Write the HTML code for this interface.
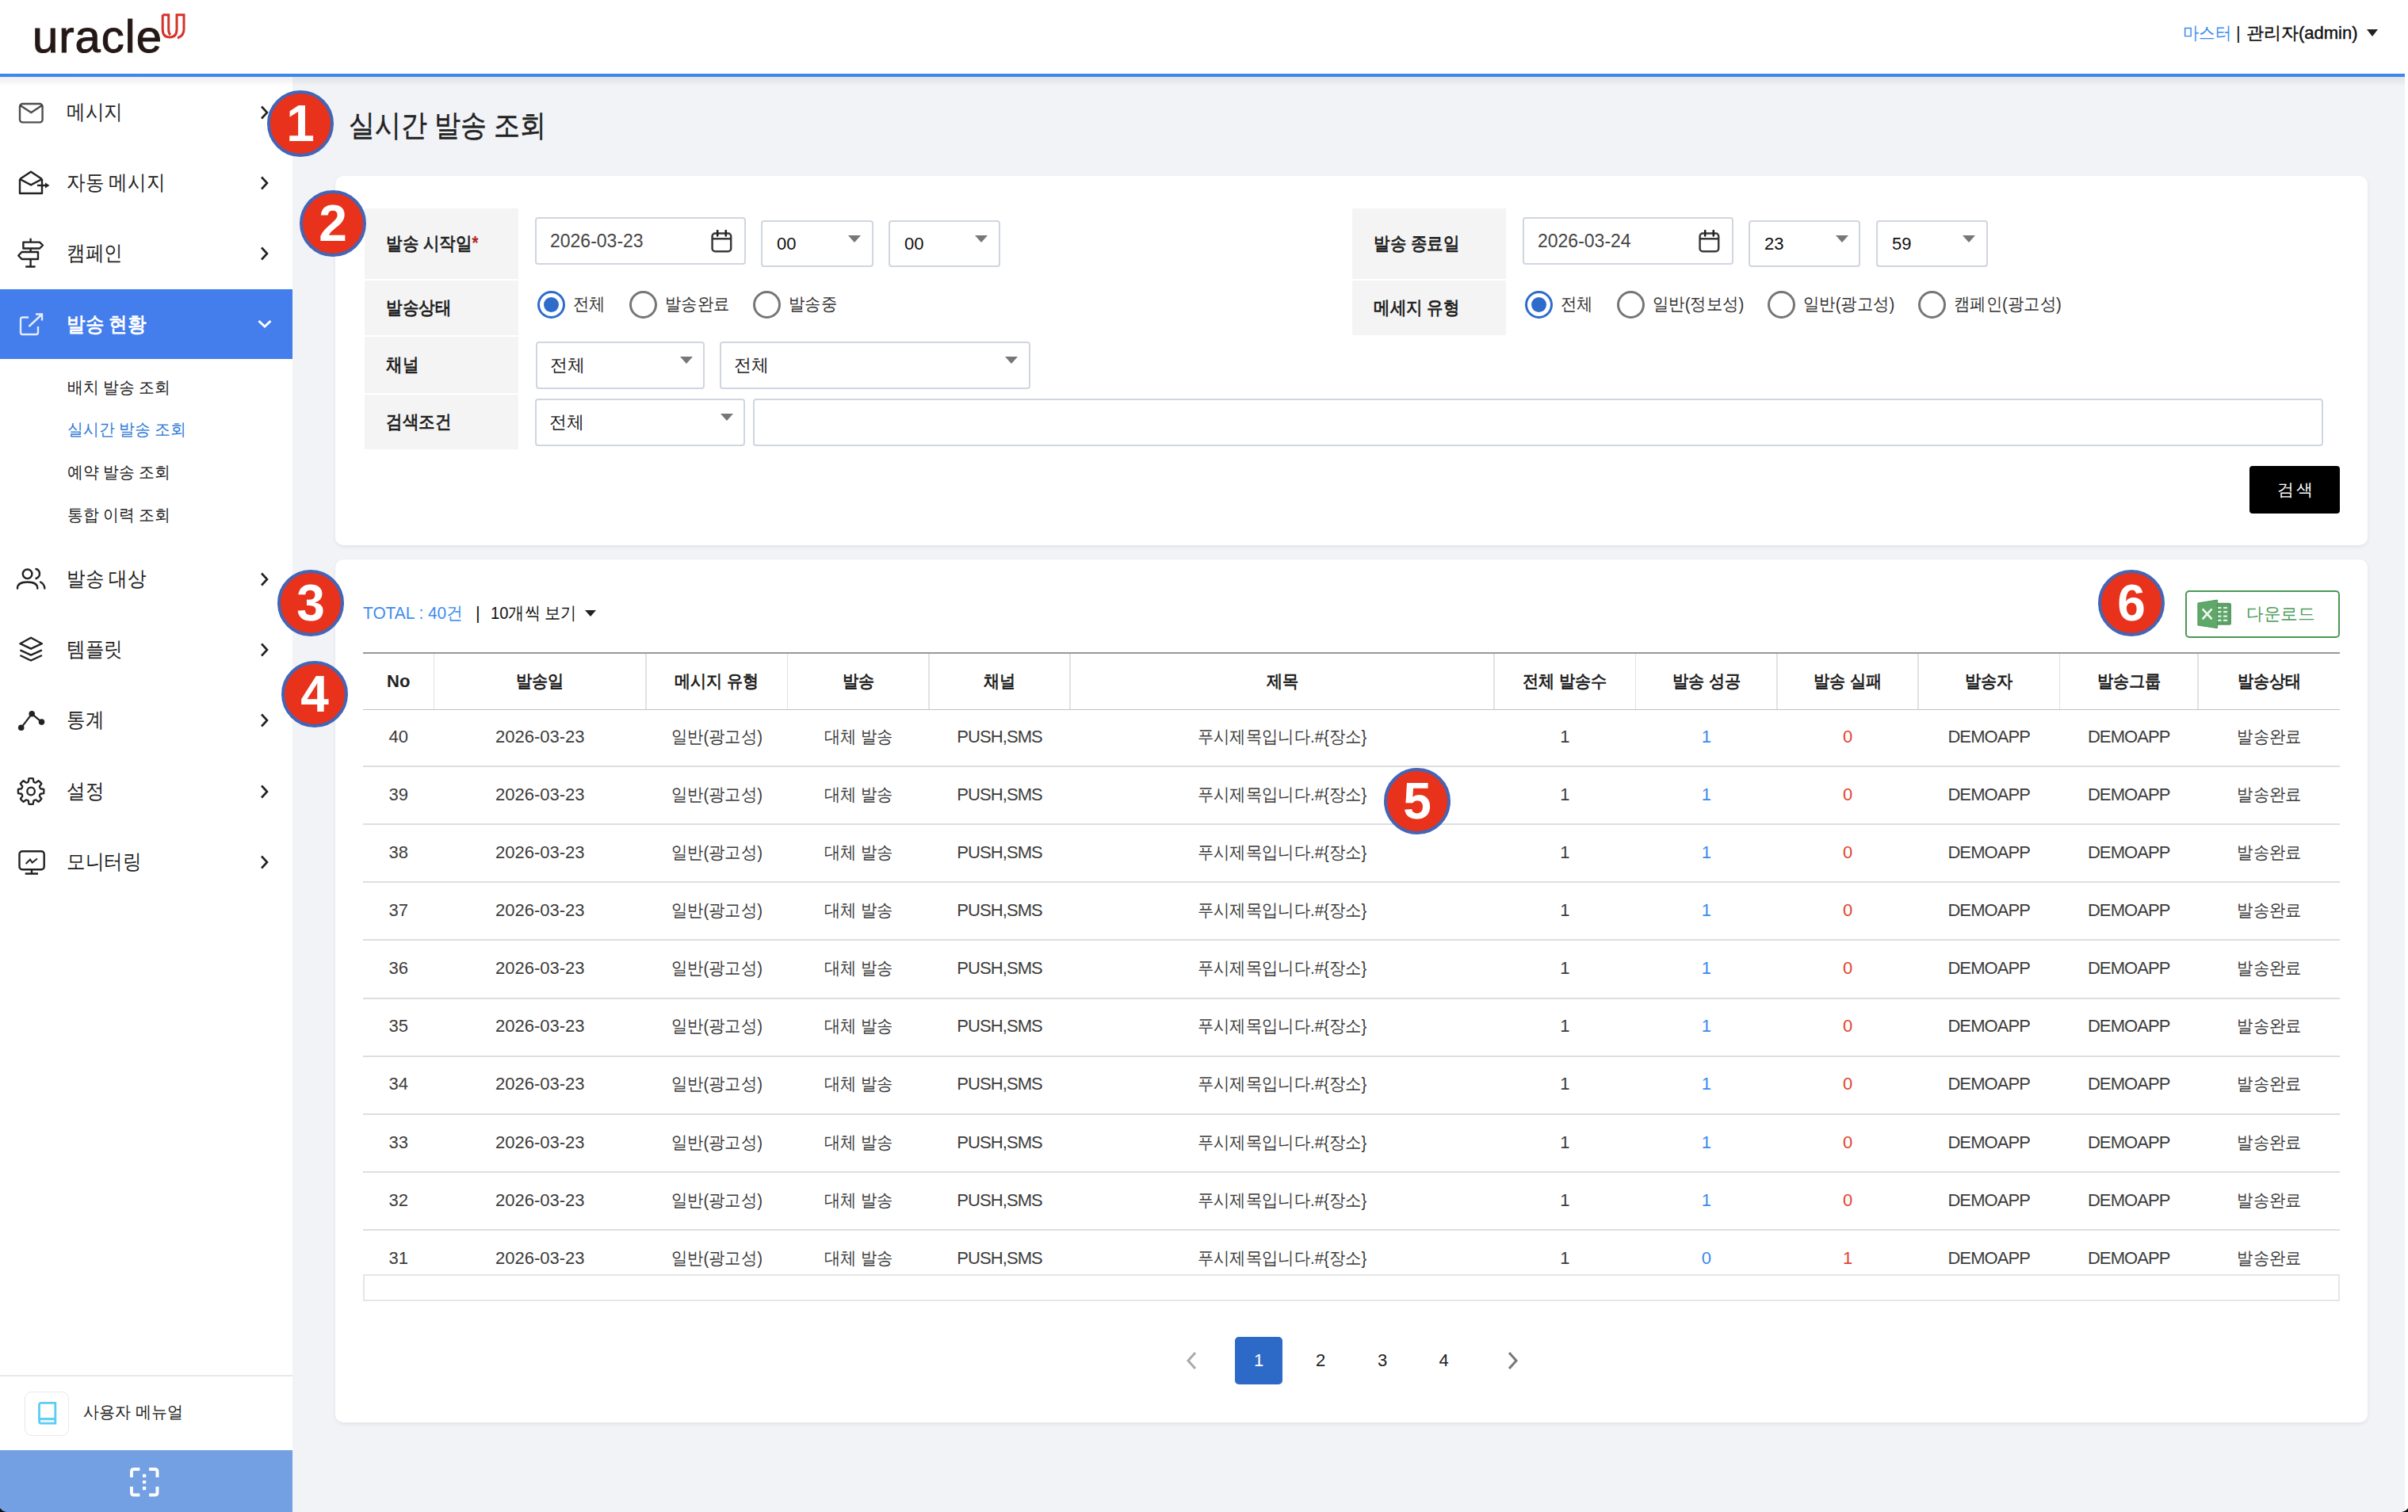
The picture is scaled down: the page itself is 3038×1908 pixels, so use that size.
<!DOCTYPE html><html><head><meta charset="utf-8"><title>실시간 발송 조회</title><style>
*{box-sizing:border-box;margin:0;padding:0}
html,body{width:3038px;height:1908px;overflow:hidden;background:#fff;font-family:"Liberation Sans", sans-serif;color:#222}
.abs{position:absolute}
#hdr{position:absolute;left:0;top:0;width:3034px;height:93px;background:#fff}
#bline{position:absolute;left:0;top:93px;width:3034px;height:4px;background:#3a86f2}
#content{position:absolute;left:369px;top:97px;width:2665px;height:1811px;background:#f1f3f7}
#shadow{position:absolute;left:0;top:97px;width:3034px;height:12px;background:linear-gradient(rgba(0,0,0,0.07),rgba(0,0,0,0))}
#side{position:absolute;left:0;top:97px;width:369px;height:1811px;background:#fff}
.mi{position:absolute;left:0;width:369px;height:89px}
.sx{display:inline-block;transform-origin:0 50%}
.sxc{display:inline-block;transform-origin:50% 50%}
.mi .t{position:absolute;left:83.5px;top:0;line-height:89px;font-size:25.5px;color:#222;white-space:nowrap}
.mi svg.ic{position:absolute;left:0;top:0}
.sub{position:absolute;left:85px;font-size:20.8px;color:#222;white-space:nowrap;line-height:30px}
.badge{position:absolute;border-radius:50%;background:#e8321b;border:4px solid #4465b6;display:flex;align-items:center;justify-content:center;z-index:20}
.badge span{color:#fff;font-weight:bold;font-size:64px;line-height:1;font-family:"Liberation Sans", sans-serif}
.card{position:absolute;background:#fff;border-radius:10px;box-shadow:0 2px 5px rgba(0,0,0,0.07)}
.lab{position:absolute;background:#f4f4f4;font-weight:bold;font-size:23px;color:#222;padding-left:27px;white-space:nowrap}
.inp{position:absolute;background:#fff;border:2px solid #d0d6df;border-radius:4px}
.inp .v{position:absolute;left:18px;top:0;bottom:0;display:flex;align-items:center;font-size:22px;color:#333;white-space:nowrap}
.tri{position:absolute;width:0;height:0;border-left:8.5px solid transparent;border-right:8.5px solid transparent;border-top:9px solid #777}
.radio{position:absolute;width:35px;height:35px;border-radius:50%;border:3.5px solid #767676;background:#fff}
.radio.on{border-color:#2e6ccc}
.radio.on::after{content:"";position:absolute;left:4.5px;top:4.5px;width:19px;height:19px;border-radius:50%;background:#2e6ccc}
.rl{position:absolute;font-size:22px;color:#333;white-space:nowrap;line-height:30px}
.th{position:absolute;top:825px;height:70px;display:flex;align-items:center;justify-content:center;font-weight:bold;font-size:22px;color:#222;white-space:nowrap}
.td{position:absolute;height:30px;line-height:30px;text-align:center;font-size:22px;color:#3c3c3c;white-space:nowrap}
.td.e{letter-spacing:-0.9px}
.hl{position:absolute;left:458px;width:2494px;height:2px;background:#dedede}
.vl{position:absolute;top:825px;width:1.5px;height:70px;background:#e2e2e2}
.pg{position:absolute;top:1687px;width:60px;height:60px;display:flex;align-items:center;justify-content:center;font-size:22px;color:#222}
</style></head><body>
<div id="hdr">
<div class="abs" style="left:41px;top:16px;font-size:58px;color:#231815;letter-spacing:1px;line-height:60px;-webkit-text-stroke:1px #231815">uracle</div>
<svg class="abs" style="left:203px;top:17px" width="33" height="34" viewBox="0 0 33 34"><path d="M2.2 1.7 V20 Q2.2 30 11 30 Q20 30 20 20 V1.7 H29 V20 Q29 28 21 31" fill="none" stroke="#d5332a" stroke-width="3" stroke-linejoin="miter"/><path d="M2.2 1.7 H9.7 V20 Q9.7 25 12 27" fill="none" stroke="#d5332a" stroke-width="3"/></svg>
<div class="abs" style="left:2754px;top:27px;font-size:22px;line-height:30px;white-space:nowrap;color:#3b8af0"><span class="sx" style="transform:scaleX(0.926)">마스터</span></div>
<div class="abs" style="left:2821px;top:27px;font-size:22px;line-height:30px;color:#111">|</div>
<div class="abs" style="left:2834px;top:27px;font-size:22px;line-height:30px;white-space:nowrap;color:#111;-webkit-text-stroke:0.4px #111">관리자(admin)</div>
<div class="tri" style="left:2986px;top:37px;border-top-color:#222;border-left-width:7px;border-right-width:7px;border-top-width:9px"></div>
</div>
<div id="bline"></div>
<div id="content"></div>
<div id="side"></div>
<div id="shadow"></div>
<div class="mi" style="top:97px"><svg class="ic" width="70" height="89" viewBox="0 0 70 89"><rect x="25" y="34" width="28.6" height="23.4" rx="3.5" fill="none" stroke="#222" stroke-width="2.4" opacity="0.8"/><path d="M25.5 36 L39.3 45 L53 36" fill="none" stroke="#222" stroke-width="2.4" opacity="0.8"/></svg><div class="t"><span class="sx" style="transform:scaleX(0.905)">메시지</span></div><svg class="abs" style="left:322px;top:34px" width="22" height="22" viewBox="0 0 22 22"><path d="M8 3.5 L15 11 L8 18.5" fill="none" stroke="#222" stroke-width="2.6"/></svg></div>
<div class="mi" style="top:186px"><svg class="ic" width="70" height="89" viewBox="0 0 70 89"><path d="M25 40 L39 30.7 L53 40" fill="none" stroke="#222" stroke-width="2.4" stroke-linejoin="round"/><path d="M25 40 V58 H53 V40" fill="none" stroke="#222" stroke-width="2.4" stroke-linejoin="round"/><path d="M25 40 L39 47.3 L53 40" fill="none" stroke="#222" stroke-width="2.4"/><path d="M47 48 H60" fill="none" stroke="#222" stroke-width="2.4"/><path d="M57 44.5 L62.5 48 L57 51.5 Z" fill="#222"/></svg><div class="t"><span class="sx" style="transform:scaleX(0.905)">자동 메시지</span></div><svg class="abs" style="left:322px;top:34px" width="22" height="22" viewBox="0 0 22 22"><path d="M8 3.5 L15 11 L8 18.5" fill="none" stroke="#222" stroke-width="2.6"/></svg></div>
<div class="mi" style="top:275px"><svg class="ic" width="70" height="89" viewBox="0 0 70 89"><path d="M38.6 25.8 V61.5 M32.2 61.5 H44.6" fill="none" stroke="#222" stroke-width="2.4"/><path d="M29.4 30.6 H50 L54 34.5 L50 38.5 H29.4 Z" fill="#fff" stroke="#222" stroke-width="2.4" stroke-linejoin="round"/><path d="M48 43 H27.5 L23.2 47.5 L27.5 52 H48 Z" fill="#fff" stroke="#222" stroke-width="2.4" stroke-linejoin="round"/></svg><div class="t"><span class="sx" style="transform:scaleX(0.905)">캠페인</span></div><svg class="abs" style="left:322px;top:34px" width="22" height="22" viewBox="0 0 22 22"><path d="M8 3.5 L15 11 L8 18.5" fill="none" stroke="#222" stroke-width="2.6"/></svg></div>
<div class="mi" style="top:685.5px"><svg class="ic" width="70" height="89" viewBox="0 0 70 89"><circle cx="34.6" cy="38.3" r="5.8" fill="none" stroke="#222" stroke-width="2.4"/><path d="M22 56.5 Q22 48.5 34.6 48.5 Q47.3 48.5 47.3 56.5" fill="none" stroke="#222" stroke-width="2.4" stroke-linecap="round"/><path d="M45.5 32 Q50 33.5 50 38 Q50 42.5 45.5 44 M51 48.5 Q56 51 56.3 56.5" fill="none" stroke="#222" stroke-width="2.4" stroke-linecap="round"/></svg><div class="t"><span class="sx" style="transform:scaleX(0.905)">발송 대상</span></div><svg class="abs" style="left:322px;top:34px" width="22" height="22" viewBox="0 0 22 22"><path d="M8 3.5 L15 11 L8 18.5" fill="none" stroke="#222" stroke-width="2.6"/></svg></div>
<div class="mi" style="top:775px"><svg class="ic" width="70" height="89" viewBox="0 0 70 89"><path d="M25.4 37.2 L39 29.8 L52.9 37.2 L39 43.7 Z" fill="none" stroke="#222" stroke-width="2.4" stroke-linejoin="round"/><path d="M25.4 45.3 L39 51.6 L52.9 45.3 M25.4 52 L39 58.5 L52.9 52" fill="none" stroke="#222" stroke-width="2.4" stroke-linejoin="round"/></svg><div class="t"><span class="sx" style="transform:scaleX(0.905)">템플릿</span></div><svg class="abs" style="left:322px;top:34px" width="22" height="22" viewBox="0 0 22 22"><path d="M8 3.5 L15 11 L8 18.5" fill="none" stroke="#222" stroke-width="2.6"/></svg></div>
<div class="mi" style="top:864px"><svg class="ic" width="70" height="89" viewBox="0 0 70 89"><path d="M26.7 54.3 L40.2 36.8 L52.5 47.1" fill="none" stroke="#222" stroke-width="2.2"/><circle cx="26.7" cy="54.3" r="3.8" fill="#222"/><circle cx="40.2" cy="36.8" r="3.8" fill="#222"/><circle cx="52.5" cy="47.1" r="3.8" fill="#222"/></svg><div class="t"><span class="sx" style="transform:scaleX(0.905)">통계</span></div><svg class="abs" style="left:322px;top:34px" width="22" height="22" viewBox="0 0 22 22"><path d="M8 3.5 L15 11 L8 18.5" fill="none" stroke="#222" stroke-width="2.6"/></svg></div>
<div class="mi" style="top:953.5px"><svg class="ic" width="70" height="89" viewBox="0 0 70 89"><g transform="translate(39.1,44.5)"><path d="M-3.24 -12.07 L-2.69 -16.08 A16.3 16.3 0 0 1 2.69 -16.08 L3.24 -12.07 Q4.40 -10.62 6.25 -10.83 L6.25 -10.83 L9.47 -13.27 A16.3 16.3 0 0 1 13.27 -9.47 L10.83 -6.25 Q10.62 -4.40 12.07 -3.24 L12.07 -3.24 L16.08 -2.69 A16.3 16.3 0 0 1 16.08 2.69 L12.07 3.24 Q10.62 4.40 10.83 6.25 L10.83 6.25 L13.27 9.47 A16.3 16.3 0 0 1 9.47 13.27 L6.25 10.83 Q4.40 10.62 3.24 12.07 L3.24 12.07 L2.69 16.08 A16.3 16.3 0 0 1 -2.69 16.08 L-3.24 12.07 Q-4.40 10.62 -6.25 10.83 L-6.25 10.83 L-9.47 13.27 A16.3 16.3 0 0 1 -13.27 9.47 L-10.83 6.25 Q-10.62 4.40 -12.07 3.24 L-12.07 3.24 L-16.08 2.69 A16.3 16.3 0 0 1 -16.08 -2.69 L-12.07 -3.24 Q-10.62 -4.40 -10.83 -6.25 L-10.83 -6.25 L-13.27 -9.47 A16.3 16.3 0 0 1 -9.47 -13.27 L-6.25 -10.83 Q-4.40 -10.62 -3.24 -12.07 Z" fill="none" stroke="#222" stroke-width="2.3" stroke-linejoin="round"/><circle r="4.8" fill="none" stroke="#222" stroke-width="2.3"/></g></svg><div class="t"><span class="sx" style="transform:scaleX(0.905)">설정</span></div><svg class="abs" style="left:322px;top:34px" width="22" height="22" viewBox="0 0 22 22"><path d="M8 3.5 L15 11 L8 18.5" fill="none" stroke="#222" stroke-width="2.6"/></svg></div>
<div class="mi" style="top:1042.5px"><svg class="ic" width="70" height="89" viewBox="0 0 70 89"><rect x="24.5" y="31.3" width="31.2" height="23" rx="3.5" fill="none" stroke="#222" stroke-width="2.4"/><path d="M31.7 59.5 H48 M40 54.5 V59.5" fill="none" stroke="#222" stroke-width="2.4"/><path d="M32.7 47 L38 41.5 L40.7 45.5 L47 40.5" fill="none" stroke="#222" stroke-width="2"/></svg><div class="t"><span class="sx" style="transform:scaleX(0.905)">모니터링</span></div><svg class="abs" style="left:322px;top:34px" width="22" height="22" viewBox="0 0 22 22"><path d="M8 3.5 L15 11 L8 18.5" fill="none" stroke="#222" stroke-width="2.6"/></svg></div>
<div class="mi" style="top:365px;height:88px;background:#447dec"><svg class="ic" width="70" height="89" viewBox="0 0 70 89"><path d="M36 35.5 H28.5 Q26 35.5 26 38 V54.5 Q26 57 28.5 57 H45.5 Q48 57 48 54.5 V47" fill="none" stroke="#fff" stroke-width="2.4" opacity="0.85"/><path d="M36.5 47 L52.5 32 M45 31.5 H53 V39.5" fill="none" stroke="#fff" stroke-width="2.4" opacity="0.85"/></svg><div class="t" style="color:#fff;font-weight:bold;line-height:88px"><span class="sx" style="transform:scaleX(0.905)">발송 현황</span></div><svg class="abs" style="left:323px;top:33px" width="22" height="22" viewBox="0 0 22 22"><path d="M3.5 7 L11 14 L18.5 7" fill="none" stroke="#fff" stroke-width="3"/></svg></div>
<div class="sub" style="top:474.0px;color:#222"><span class="sx" style="transform:scaleX(0.944)">배치 발송 조회</span></div>
<div class="sub" style="top:526.7px;color:#2f7ad8"><span class="sx" style="transform:scaleX(0.944)">실시간 발송 조회</span></div>
<div class="sub" style="top:580.7px;color:#222"><span class="sx" style="transform:scaleX(0.944)">예약 발송 조회</span></div>
<div class="sub" style="top:634.7px;color:#222"><span class="sx" style="transform:scaleX(0.944)">통합 이력 조회</span></div>
<div class="abs" style="left:0;top:1735px;width:369px;height:2px;background:#e8e8e8"></div>
<div class="abs" style="left:30.5px;top:1755.5px;width:56px;height:56px;border:1.5px solid #e9e9eb;border-radius:9px;background:#fff"></div>
<svg class="abs" style="left:47px;top:1768px" width="26" height="31" viewBox="0 0 26 31"><path d="M5 2.3 H22.8 V28.2 H5 Q2.5 28.2 2.5 25.7 V4.8 Q2.5 2.3 5 2.3 Z" fill="none" stroke="#5ccdf2" stroke-width="2.8"/><path d="M3 22.5 H22.5" stroke="#5ccdf2" stroke-width="2.8"/><path d="M4 25 H22" stroke="#5ccdf2" stroke-width="1" opacity="0.35"/></svg>
<div class="abs" style="left:105px;top:1767px;font-size:21px;line-height:30px;color:#222;white-space:nowrap"><span class="sx" style="transform:scaleX(0.953)">사용자 메뉴얼</span></div>
<div class="abs" style="left:0;top:1830px;width:369px;height:78px;background:#739fe3"></div>
<svg class="abs" style="left:163.8px;top:1851.7px" width="37" height="37" viewBox="0 0 37 37"><path d="M1.95 12.3 V5 Q1.95 1.95 5 1.95 H12.3 M24.1 1.95 H31.4 Q34.45 1.95 34.45 5 V12.3 M34.45 24.1 V31.4 Q34.45 34.45 31.4 34.45 H24.1 M12.3 34.45 H5 Q1.95 34.45 1.95 31.4 V24.1" fill="none" stroke="#fff" stroke-width="3.9"/><rect x="16" y="8.3" width="4.2" height="4" fill="#fff"/><rect x="16" y="16.3" width="4.2" height="3.8" fill="#fff"/><rect x="16" y="24" width="4.2" height="4.2" fill="#fff"/></svg>
<div class="abs" style="left:440px;top:134px;font-size:38px;line-height:48px;color:#222;white-space:nowrap;-webkit-text-stroke:0.5px #222"><span class="sx" style="transform:scaleX(0.867)">실시간 발송 조회</span></div>
<div class="card" style="left:423px;top:222px;width:2564px;height:466px"></div>
<div class="lab" style="left:460px;top:263px;width:194px;height:89px;line-height:89px"><span class="sx" style="transform:scaleX(0.893)">발송 시작일<span style="color:#b5231f">*</span></span></div>
<div class="lab" style="left:460px;top:354px;width:194px;height:69px;line-height:69px"><span class="sx" style="transform:scaleX(0.893)">발송상태</span></div>
<div class="lab" style="left:460px;top:425px;width:194px;height:71px;line-height:71px"><span class="sx" style="transform:scaleX(0.893)">채널</span></div>
<div class="lab" style="left:460px;top:498px;width:194px;height:69px;line-height:69px"><span class="sx" style="transform:scaleX(0.893)">검색조건</span></div>
<div class="lab" style="left:1706px;top:263px;width:194px;height:89px;line-height:89px"><span class="sx" style="transform:scaleX(0.893)">발송 종료일</span></div>
<div class="lab" style="left:1706px;top:354px;width:194px;height:69px;line-height:69px"><span class="sx" style="transform:scaleX(0.893)">메세지 유형</span></div>
<div class="inp" style="left:675px;top:274px;width:266px;height:60px"><div class="v" style="left:17px;color:#333"><span style="font-size:23px;color:#444">2026-03-23</span></div><svg class="abs" style="left:220px;top:14px" width="28" height="30" viewBox="0 0 28 30"><rect x="1.6" y="4.6" width="23.6" height="22.6" rx="3.5" fill="none" stroke="#3a3a3a" stroke-width="2.5"/><path d="M1.6 11.3 H25.2" stroke="#2a2a2a" stroke-width="2.3"/><path d="M8.2 1 V7.5 M18.8 1 V7.5" stroke="#222" stroke-width="2.6" stroke-linecap="round"/></svg></div>
<div class="inp" style="left:960px;top:278px;width:142px;height:59px"><div class="v" style="left:18px;color:#111">00</div><div class="tri" style="left:108px;top:17px"></div></div>
<div class="inp" style="left:1121px;top:278px;width:141px;height:59px"><div class="v" style="left:18px;color:#111">00</div><div class="tri" style="left:107px;top:17px"></div></div>
<div class="inp" style="left:1921px;top:274px;width:266px;height:60px"><div class="v" style="left:17px;color:#333"><span style="font-size:23px;color:#444">2026-03-24</span></div><svg class="abs" style="left:220px;top:14px" width="28" height="30" viewBox="0 0 28 30"><rect x="1.6" y="4.6" width="23.6" height="22.6" rx="3.5" fill="none" stroke="#3a3a3a" stroke-width="2.5"/><path d="M1.6 11.3 H25.2" stroke="#2a2a2a" stroke-width="2.3"/><path d="M8.2 1 V7.5 M18.8 1 V7.5" stroke="#222" stroke-width="2.6" stroke-linecap="round"/></svg></div>
<div class="inp" style="left:2206px;top:278px;width:141px;height:59px"><div class="v" style="left:18px;color:#111">23</div><div class="tri" style="left:108px;top:17px"></div></div>
<div class="inp" style="left:2367px;top:278px;width:141px;height:59px"><div class="v" style="left:18px;color:#111">59</div><div class="tri" style="left:107px;top:17px"></div></div>
<div class="inp" style="left:676px;top:431px;width:213px;height:60px"><div class="v" style="left:16px;color:#222">전체</div><div class="tri" style="left:180px;top:17px"></div></div>
<div class="inp" style="left:908px;top:431px;width:392px;height:60px"><div class="v" style="left:16px;color:#222">전체</div><div class="tri" style="left:358px;top:17px"></div></div>
<div class="inp" style="left:675px;top:503px;width:265px;height:60px"><div class="v" style="left:16px;color:#222">전체</div><div class="tri" style="left:232px;top:17px"></div></div>
<div class="inp" style="left:950px;top:503px;width:1981px;height:60px"></div>
<div class="radio on" style="left:678px;top:367px"></div>
<div class="rl" style="left:723px;top:369.0px"><span class="sx" style="transform:scaleX(0.925)">전체</span></div>
<div class="radio" style="left:794px;top:367px"></div>
<div class="rl" style="left:839px;top:369.0px"><span class="sx" style="transform:scaleX(0.925)">발송완료</span></div>
<div class="radio" style="left:950px;top:367px"></div>
<div class="rl" style="left:995px;top:369.0px"><span class="sx" style="transform:scaleX(0.925)">발송중</span></div>
<div class="radio on" style="left:1924px;top:367px"></div>
<div class="rl" style="left:1969px;top:369.0px"><span class="sx" style="transform:scaleX(0.925)">전체</span></div>
<div class="radio" style="left:2040px;top:367px"></div>
<div class="rl" style="left:2085px;top:369.0px"><span class="sx" style="transform:scaleX(0.925)">일반(정보성)</span></div>
<div class="radio" style="left:2230px;top:367px"></div>
<div class="rl" style="left:2275px;top:369.0px"><span class="sx" style="transform:scaleX(0.925)">일반(광고성)</span></div>
<div class="radio" style="left:2420px;top:367px"></div>
<div class="rl" style="left:2465px;top:369.0px"><span class="sx" style="transform:scaleX(0.925)">캠페인(광고성)</span></div>
<div class="abs" style="left:2838px;top:588px;width:114px;height:60px;background:#000;border-radius:4px;color:#fff;font-size:21px;letter-spacing:3px;display:flex;align-items:center;justify-content:center;padding-left:3px">검색</div>
<div class="card" style="left:423px;top:706px;width:2564px;height:1089px"></div>
<div class="abs" style="left:458px;top:759px;font-size:22px;line-height:30px;white-space:nowrap;color:#3d8cf0"><span class="sx" style="transform:scaleX(0.949)">TOTAL : 40건</span></div>
<div class="abs" style="left:600px;top:759px;font-size:22px;line-height:30px;color:#111">|</div>
<div class="abs" style="left:619px;top:759px;font-size:22px;line-height:30px;white-space:nowrap;color:#111"><span class="sx" style="transform:scaleX(0.915)">10개씩 보기</span></div>
<div class="tri" style="left:738px;top:770px;border-top-color:#222;border-left-width:7px;border-right-width:7px;border-top-width:8px"></div>
<div class="abs" style="left:2757px;top:745px;width:195px;height:60px;border:2px solid #4b9755;border-radius:5px;background:#fff"></div>
<svg class="abs" style="left:2765px;top:750px" width="60" height="50" viewBox="0 0 60 50"><rect x="30" y="10.8" width="20" height="27.9" rx="2.5" fill="#5a9b63"/><rect x="32" y="13" width="15.5" height="23.5" fill="#5fa56a"/><rect x="32.8" y="15.9" width="4.8" height="2.2" rx="1" fill="#e8f2ea"/><rect x="39.9" y="15.9" width="5.2" height="2.2" rx="1" fill="#e8f2ea"/><rect x="32.8" y="21.1" width="4.8" height="2.2" rx="1" fill="#e8f2ea"/><rect x="39.9" y="21.1" width="5.2" height="2.2" rx="1" fill="#e8f2ea"/><rect x="32.8" y="26.5" width="4.8" height="2.2" rx="1" fill="#e8f2ea"/><rect x="39.9" y="26.5" width="5.2" height="2.2" rx="1" fill="#e8f2ea"/><rect x="32.8" y="31.8" width="4.8" height="2.2" rx="1" fill="#e8f2ea"/><rect x="39.9" y="31.8" width="5.2" height="2.2" rx="1" fill="#e8f2ea"/><path d="M7.9 11 L32.6 7.1 V42.7 L7.9 39 Z" fill="#5fa86a"/><path d="M7.9 11 L32.6 7.1 V42.7 L7.9 39 Z" fill="none" stroke="#4f9659" stroke-width="1"/><path d="M14.4 19.2 L24.9 30.5 M24.9 19.2 L14.4 30.5" stroke="#eef6ef" stroke-width="2.6" stroke-linecap="round"/></svg>
<div class="abs" style="left:2834px;top:760px;font-size:22px;line-height:30px;color:#4c9d57;white-space:nowrap"><span class="sx" style="transform:scaleX(0.986)">다운로드</span></div>
<div class="abs" style="left:458px;top:823px;width:2494px;height:2px;background:#999999"></div>
<div class="abs" style="left:458px;top:894.5px;width:2494px;height:1.7px;background:#c2c2c2"></div>
<div class="th" style="left:458px;width:89.5px;letter-spacing:0">No</div>
<div class="th" style="left:547.5px;width:267.5px"><span class="sxc" style="transform:scaleX(0.918)">발송일</span></div>
<div class="th" style="left:815px;width:178.5px"><span class="sxc" style="transform:scaleX(0.918)">메시지 유형</span></div>
<div class="th" style="left:993.5px;width:178.5px"><span class="sxc" style="transform:scaleX(0.918)">발송</span></div>
<div class="th" style="left:1172px;width:178px"><span class="sxc" style="transform:scaleX(0.918)">채널</span></div>
<div class="th" style="left:1350px;width:535px"><span class="sxc" style="transform:scaleX(0.918)">제목</span></div>
<div class="th" style="left:1885px;width:178.5px"><span class="sxc" style="transform:scaleX(0.918)">전체 발송수</span></div>
<div class="th" style="left:2063.5px;width:178.5px"><span class="sxc" style="transform:scaleX(0.918)">발송 성공</span></div>
<div class="th" style="left:2242px;width:178px"><span class="sxc" style="transform:scaleX(0.918)">발송 실패</span></div>
<div class="th" style="left:2420px;width:178.5px"><span class="sxc" style="transform:scaleX(0.918)">발송자</span></div>
<div class="th" style="left:2598.5px;width:174.5px"><span class="sxc" style="transform:scaleX(0.918)">발송그룹</span></div>
<div class="th" style="left:2773px;width:179px"><span class="sxc" style="transform:scaleX(0.918)">발송상태</span></div>
<div class="vl" style="left:546.5px"></div>
<div class="vl" style="left:814px"></div>
<div class="vl" style="left:992.5px"></div>
<div class="vl" style="left:1171px"></div>
<div class="vl" style="left:1349px"></div>
<div class="vl" style="left:1884px"></div>
<div class="vl" style="left:2062.5px"></div>
<div class="vl" style="left:2241px"></div>
<div class="vl" style="left:2419px"></div>
<div class="vl" style="left:2597.5px"></div>
<div class="vl" style="left:2772px"></div>
<div class="td" style="left:458px;width:89.5px;top:914.6px">40</div>
<div class="td" style="left:547.5px;width:267.5px;top:914.6px">2026-03-23</div>
<div class="td" style="left:815px;width:178.5px;top:914.6px"><span class="sxc" style="transform:scaleX(0.924)">일반(광고성)</span></div>
<div class="td" style="left:993.5px;width:178.5px;top:914.6px"><span class="sxc" style="transform:scaleX(0.924)">대체 발송</span></div>
<div class="td e" style="left:1172px;width:178px;top:914.6px">PUSH,SMS</div>
<div class="td" style="left:1350px;width:535px;top:914.6px"><span class="sxc" style="transform:scaleX(0.924)">푸시제목입니다.#{장소}</span></div>
<div class="td" style="left:1885px;width:178.5px;top:914.6px">1</div>
<div class="td" style="left:2063.5px;width:178.5px;top:914.6px"><span style="color:#3b8af0">1</span></div>
<div class="td" style="left:2242px;width:178px;top:914.6px"><span style="color:#e5432f">0</span></div>
<div class="td e" style="left:2420px;width:178.5px;top:914.6px">DEMOAPP</div>
<div class="td e" style="left:2598.5px;width:174.5px;top:914.6px">DEMOAPP</div>
<div class="td" style="left:2773px;width:179px;top:914.6px"><span class="sxc" style="transform:scaleX(0.924)">발송완료</span></div>
<div class="hl" style="top:966.0px"></div>
<div class="td" style="left:458px;width:89.5px;top:987.7px">39</div>
<div class="td" style="left:547.5px;width:267.5px;top:987.7px">2026-03-23</div>
<div class="td" style="left:815px;width:178.5px;top:987.7px"><span class="sxc" style="transform:scaleX(0.924)">일반(광고성)</span></div>
<div class="td" style="left:993.5px;width:178.5px;top:987.7px"><span class="sxc" style="transform:scaleX(0.924)">대체 발송</span></div>
<div class="td e" style="left:1172px;width:178px;top:987.7px">PUSH,SMS</div>
<div class="td" style="left:1350px;width:535px;top:987.7px"><span class="sxc" style="transform:scaleX(0.924)">푸시제목입니다.#{장소}</span></div>
<div class="td" style="left:1885px;width:178.5px;top:987.7px">1</div>
<div class="td" style="left:2063.5px;width:178.5px;top:987.7px"><span style="color:#3b8af0">1</span></div>
<div class="td" style="left:2242px;width:178px;top:987.7px"><span style="color:#e5432f">0</span></div>
<div class="td e" style="left:2420px;width:178.5px;top:987.7px">DEMOAPP</div>
<div class="td e" style="left:2598.5px;width:174.5px;top:987.7px">DEMOAPP</div>
<div class="td" style="left:2773px;width:179px;top:987.7px"><span class="sxc" style="transform:scaleX(0.924)">발송완료</span></div>
<div class="hl" style="top:1039.1px"></div>
<div class="td" style="left:458px;width:89.5px;top:1060.9px">38</div>
<div class="td" style="left:547.5px;width:267.5px;top:1060.9px">2026-03-23</div>
<div class="td" style="left:815px;width:178.5px;top:1060.9px"><span class="sxc" style="transform:scaleX(0.924)">일반(광고성)</span></div>
<div class="td" style="left:993.5px;width:178.5px;top:1060.9px"><span class="sxc" style="transform:scaleX(0.924)">대체 발송</span></div>
<div class="td e" style="left:1172px;width:178px;top:1060.9px">PUSH,SMS</div>
<div class="td" style="left:1350px;width:535px;top:1060.9px"><span class="sxc" style="transform:scaleX(0.924)">푸시제목입니다.#{장소}</span></div>
<div class="td" style="left:1885px;width:178.5px;top:1060.9px">1</div>
<div class="td" style="left:2063.5px;width:178.5px;top:1060.9px"><span style="color:#3b8af0">1</span></div>
<div class="td" style="left:2242px;width:178px;top:1060.9px"><span style="color:#e5432f">0</span></div>
<div class="td e" style="left:2420px;width:178.5px;top:1060.9px">DEMOAPP</div>
<div class="td e" style="left:2598.5px;width:174.5px;top:1060.9px">DEMOAPP</div>
<div class="td" style="left:2773px;width:179px;top:1060.9px"><span class="sxc" style="transform:scaleX(0.924)">발송완료</span></div>
<div class="hl" style="top:1112.3px"></div>
<div class="td" style="left:458px;width:89.5px;top:1134.0px">37</div>
<div class="td" style="left:547.5px;width:267.5px;top:1134.0px">2026-03-23</div>
<div class="td" style="left:815px;width:178.5px;top:1134.0px"><span class="sxc" style="transform:scaleX(0.924)">일반(광고성)</span></div>
<div class="td" style="left:993.5px;width:178.5px;top:1134.0px"><span class="sxc" style="transform:scaleX(0.924)">대체 발송</span></div>
<div class="td e" style="left:1172px;width:178px;top:1134.0px">PUSH,SMS</div>
<div class="td" style="left:1350px;width:535px;top:1134.0px"><span class="sxc" style="transform:scaleX(0.924)">푸시제목입니다.#{장소}</span></div>
<div class="td" style="left:1885px;width:178.5px;top:1134.0px">1</div>
<div class="td" style="left:2063.5px;width:178.5px;top:1134.0px"><span style="color:#3b8af0">1</span></div>
<div class="td" style="left:2242px;width:178px;top:1134.0px"><span style="color:#e5432f">0</span></div>
<div class="td e" style="left:2420px;width:178.5px;top:1134.0px">DEMOAPP</div>
<div class="td e" style="left:2598.5px;width:174.5px;top:1134.0px">DEMOAPP</div>
<div class="td" style="left:2773px;width:179px;top:1134.0px"><span class="sxc" style="transform:scaleX(0.924)">발송완료</span></div>
<div class="hl" style="top:1185.4px"></div>
<div class="td" style="left:458px;width:89.5px;top:1207.1px">36</div>
<div class="td" style="left:547.5px;width:267.5px;top:1207.1px">2026-03-23</div>
<div class="td" style="left:815px;width:178.5px;top:1207.1px"><span class="sxc" style="transform:scaleX(0.924)">일반(광고성)</span></div>
<div class="td" style="left:993.5px;width:178.5px;top:1207.1px"><span class="sxc" style="transform:scaleX(0.924)">대체 발송</span></div>
<div class="td e" style="left:1172px;width:178px;top:1207.1px">PUSH,SMS</div>
<div class="td" style="left:1350px;width:535px;top:1207.1px"><span class="sxc" style="transform:scaleX(0.924)">푸시제목입니다.#{장소}</span></div>
<div class="td" style="left:1885px;width:178.5px;top:1207.1px">1</div>
<div class="td" style="left:2063.5px;width:178.5px;top:1207.1px"><span style="color:#3b8af0">1</span></div>
<div class="td" style="left:2242px;width:178px;top:1207.1px"><span style="color:#e5432f">0</span></div>
<div class="td e" style="left:2420px;width:178.5px;top:1207.1px">DEMOAPP</div>
<div class="td e" style="left:2598.5px;width:174.5px;top:1207.1px">DEMOAPP</div>
<div class="td" style="left:2773px;width:179px;top:1207.1px"><span class="sxc" style="transform:scaleX(0.924)">발송완료</span></div>
<div class="hl" style="top:1258.5px"></div>
<div class="td" style="left:458px;width:89.5px;top:1280.2px">35</div>
<div class="td" style="left:547.5px;width:267.5px;top:1280.2px">2026-03-23</div>
<div class="td" style="left:815px;width:178.5px;top:1280.2px"><span class="sxc" style="transform:scaleX(0.924)">일반(광고성)</span></div>
<div class="td" style="left:993.5px;width:178.5px;top:1280.2px"><span class="sxc" style="transform:scaleX(0.924)">대체 발송</span></div>
<div class="td e" style="left:1172px;width:178px;top:1280.2px">PUSH,SMS</div>
<div class="td" style="left:1350px;width:535px;top:1280.2px"><span class="sxc" style="transform:scaleX(0.924)">푸시제목입니다.#{장소}</span></div>
<div class="td" style="left:1885px;width:178.5px;top:1280.2px">1</div>
<div class="td" style="left:2063.5px;width:178.5px;top:1280.2px"><span style="color:#3b8af0">1</span></div>
<div class="td" style="left:2242px;width:178px;top:1280.2px"><span style="color:#e5432f">0</span></div>
<div class="td e" style="left:2420px;width:178.5px;top:1280.2px">DEMOAPP</div>
<div class="td e" style="left:2598.5px;width:174.5px;top:1280.2px">DEMOAPP</div>
<div class="td" style="left:2773px;width:179px;top:1280.2px"><span class="sxc" style="transform:scaleX(0.924)">발송완료</span></div>
<div class="hl" style="top:1331.7px"></div>
<div class="td" style="left:458px;width:89.5px;top:1353.4px">34</div>
<div class="td" style="left:547.5px;width:267.5px;top:1353.4px">2026-03-23</div>
<div class="td" style="left:815px;width:178.5px;top:1353.4px"><span class="sxc" style="transform:scaleX(0.924)">일반(광고성)</span></div>
<div class="td" style="left:993.5px;width:178.5px;top:1353.4px"><span class="sxc" style="transform:scaleX(0.924)">대체 발송</span></div>
<div class="td e" style="left:1172px;width:178px;top:1353.4px">PUSH,SMS</div>
<div class="td" style="left:1350px;width:535px;top:1353.4px"><span class="sxc" style="transform:scaleX(0.924)">푸시제목입니다.#{장소}</span></div>
<div class="td" style="left:1885px;width:178.5px;top:1353.4px">1</div>
<div class="td" style="left:2063.5px;width:178.5px;top:1353.4px"><span style="color:#3b8af0">1</span></div>
<div class="td" style="left:2242px;width:178px;top:1353.4px"><span style="color:#e5432f">0</span></div>
<div class="td e" style="left:2420px;width:178.5px;top:1353.4px">DEMOAPP</div>
<div class="td e" style="left:2598.5px;width:174.5px;top:1353.4px">DEMOAPP</div>
<div class="td" style="left:2773px;width:179px;top:1353.4px"><span class="sxc" style="transform:scaleX(0.924)">발송완료</span></div>
<div class="hl" style="top:1404.8px"></div>
<div class="td" style="left:458px;width:89.5px;top:1426.5px">33</div>
<div class="td" style="left:547.5px;width:267.5px;top:1426.5px">2026-03-23</div>
<div class="td" style="left:815px;width:178.5px;top:1426.5px"><span class="sxc" style="transform:scaleX(0.924)">일반(광고성)</span></div>
<div class="td" style="left:993.5px;width:178.5px;top:1426.5px"><span class="sxc" style="transform:scaleX(0.924)">대체 발송</span></div>
<div class="td e" style="left:1172px;width:178px;top:1426.5px">PUSH,SMS</div>
<div class="td" style="left:1350px;width:535px;top:1426.5px"><span class="sxc" style="transform:scaleX(0.924)">푸시제목입니다.#{장소}</span></div>
<div class="td" style="left:1885px;width:178.5px;top:1426.5px">1</div>
<div class="td" style="left:2063.5px;width:178.5px;top:1426.5px"><span style="color:#3b8af0">1</span></div>
<div class="td" style="left:2242px;width:178px;top:1426.5px"><span style="color:#e5432f">0</span></div>
<div class="td e" style="left:2420px;width:178.5px;top:1426.5px">DEMOAPP</div>
<div class="td e" style="left:2598.5px;width:174.5px;top:1426.5px">DEMOAPP</div>
<div class="td" style="left:2773px;width:179px;top:1426.5px"><span class="sxc" style="transform:scaleX(0.924)">발송완료</span></div>
<div class="hl" style="top:1477.9px"></div>
<div class="td" style="left:458px;width:89.5px;top:1499.6px">32</div>
<div class="td" style="left:547.5px;width:267.5px;top:1499.6px">2026-03-23</div>
<div class="td" style="left:815px;width:178.5px;top:1499.6px"><span class="sxc" style="transform:scaleX(0.924)">일반(광고성)</span></div>
<div class="td" style="left:993.5px;width:178.5px;top:1499.6px"><span class="sxc" style="transform:scaleX(0.924)">대체 발송</span></div>
<div class="td e" style="left:1172px;width:178px;top:1499.6px">PUSH,SMS</div>
<div class="td" style="left:1350px;width:535px;top:1499.6px"><span class="sxc" style="transform:scaleX(0.924)">푸시제목입니다.#{장소}</span></div>
<div class="td" style="left:1885px;width:178.5px;top:1499.6px">1</div>
<div class="td" style="left:2063.5px;width:178.5px;top:1499.6px"><span style="color:#3b8af0">1</span></div>
<div class="td" style="left:2242px;width:178px;top:1499.6px"><span style="color:#e5432f">0</span></div>
<div class="td e" style="left:2420px;width:178.5px;top:1499.6px">DEMOAPP</div>
<div class="td e" style="left:2598.5px;width:174.5px;top:1499.6px">DEMOAPP</div>
<div class="td" style="left:2773px;width:179px;top:1499.6px"><span class="sxc" style="transform:scaleX(0.924)">발송완료</span></div>
<div class="hl" style="top:1551.0px"></div>
<div class="td" style="left:458px;width:89.5px;top:1572.8px">31</div>
<div class="td" style="left:547.5px;width:267.5px;top:1572.8px">2026-03-23</div>
<div class="td" style="left:815px;width:178.5px;top:1572.8px"><span class="sxc" style="transform:scaleX(0.924)">일반(광고성)</span></div>
<div class="td" style="left:993.5px;width:178.5px;top:1572.8px"><span class="sxc" style="transform:scaleX(0.924)">대체 발송</span></div>
<div class="td e" style="left:1172px;width:178px;top:1572.8px">PUSH,SMS</div>
<div class="td" style="left:1350px;width:535px;top:1572.8px"><span class="sxc" style="transform:scaleX(0.924)">푸시제목입니다.#{장소}</span></div>
<div class="td" style="left:1885px;width:178.5px;top:1572.8px">1</div>
<div class="td" style="left:2063.5px;width:178.5px;top:1572.8px"><span style="color:#3b8af0">0</span></div>
<div class="td" style="left:2242px;width:178px;top:1572.8px"><span style="color:#e5432f">1</span></div>
<div class="td e" style="left:2420px;width:178.5px;top:1572.8px">DEMOAPP</div>
<div class="td e" style="left:2598.5px;width:174.5px;top:1572.8px">DEMOAPP</div>
<div class="td" style="left:2773px;width:179px;top:1572.8px"><span class="sxc" style="transform:scaleX(0.924)">발송완료</span></div>
<div class="abs" style="left:458px;top:1608px;width:2494px;height:34px;border:2px solid #e6e6e6;background:#fff"></div>
<div class="pg" style="left:1558px;background:#2d6ac8;color:#fff;border-radius:5px">1</div>
<div class="pg" style="left:1636.2px">2</div>
<div class="pg" style="left:1714.0px">3</div>
<div class="pg" style="left:1791.7px">4</div>
<svg class="abs" style="left:1494px;top:1705px" width="20" height="24" viewBox="0 0 20 24"><path d="M14 2 L5 12 L14 22" fill="none" stroke="#aaa" stroke-width="3"/></svg>
<svg class="abs" style="left:1898px;top:1705px" width="20" height="24" viewBox="0 0 20 24"><path d="M6 2 L15 12 L6 22" fill="none" stroke="#777" stroke-width="3"/></svg>
<div class="badge" style="left:337.0px;top:114.0px;width:84px;height:84px;"><span>1</span></div>
<div class="badge" style="left:378.0px;top:240.0px;width:84px;height:84px;"><span>2</span></div>
<div class="badge" style="left:350.0px;top:719.0px;width:84px;height:84px;"><span>3</span></div>
<div class="badge" style="left:355.0px;top:834.0px;width:84px;height:84px;"><span>4</span></div>
<div class="badge" style="left:1746.0px;top:969.0px;width:84px;height:84px;"><span>5</span></div>
<div class="badge" style="left:2647.0px;top:719.0px;width:84px;height:84px;"><span>6</span></div>
<svg class="abs" style="left:0;top:1898px;z-index:30" width="10" height="10" viewBox="0 0 10 10"><path d="M0 5 Q2.5 9 8 10 H0 Z" fill="#111"/></svg>
<svg class="abs" style="left:3028px;top:1898px;z-index:30" width="10" height="10" viewBox="0 0 10 10"><path d="M10 5 Q7.5 9 2 10 H10 Z" fill="#111"/></svg>
</body></html>
